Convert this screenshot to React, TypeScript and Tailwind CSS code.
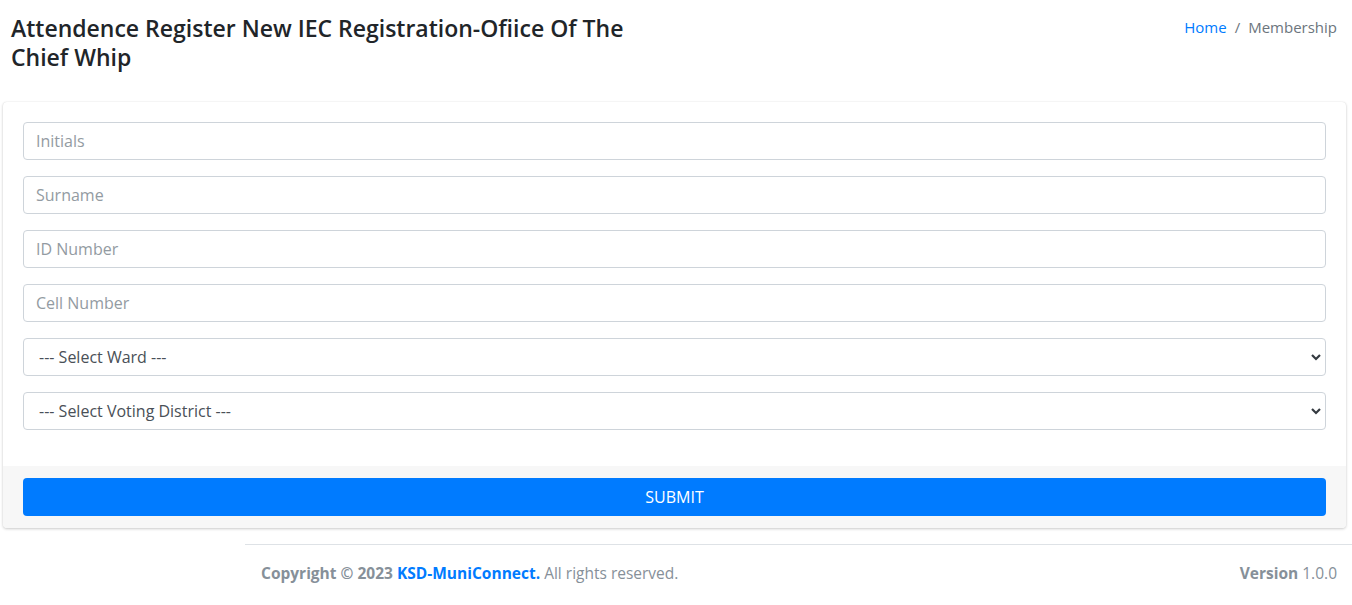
export default function App() {
  const fields = ["Initials", "Surname", "ID Number", "Cell Number"];
  const selects = ["--- Select Ward ---", "--- Select Voting District ---"];

  return (
    <div className="min-h-[605px] bg-white font-['Open_Sans',sans-serif] text-[#212529]">
      {/* content header */}
      <div className="flex justify-between px-[11px] pt-[14px] pb-[30px]">
        <h1 className="w-[640px] text-[23px] leading-[29px] font-semibold">
          Attendence Register New IEC Registration-Ofiice Of The Chief Whip
        </h1>
        <div className="flex items-start gap-2 pt-[1px] pr-[4px] text-[15px] leading-[24px]">
          <a className="text-[#007bff]">Home</a>
          <span className="text-[#6c757d]">/</span>
          <span className="text-[#6c757d]">Membership</span>
        </div>
      </div>

      {/* card */}
      <div className="ml-[3px] mr-[6px] rounded-[4px] bg-white shadow-[0_0_1px_rgba(0,0,0,0.125),0_1px_3px_rgba(0,0,0,0.2)]">
        <div className="flex flex-col gap-4 px-5 pt-5 pb-9">
          {fields.map((f) => (
            <input
              key={f}
              placeholder={f}
              className="h-[38px] w-full rounded-[4px] border border-[#ced4da] px-3 text-[16px] text-[#495057] outline-none placeholder:text-[#939ba2]"
            />
          ))}
          {selects.map((s) => (
            <div key={s} className="relative">
              <select className="h-[38px] w-full appearance-none rounded-[4px] border border-[#ced4da] bg-white pl-[15px] text-[16px] text-[#495057] outline-none">
                <option>{s}</option>
              </select>
              <svg
                className="pointer-events-none absolute right-[4px] top-[14px]"
                width="12"
                height="10"
                viewBox="0 0 12 10"
              >
                <path d="M2 3l4 4 4-4" fill="none" stroke="#343a40" strokeWidth="2.2" />
              </svg>
            </div>
          ))}
        </div>
        <div className="rounded-b-[4px] bg-[#f7f7f7] px-5 py-3">
          <button className="h-[38px] w-full rounded-[4px] bg-[#007bff] text-[16px] text-white">
            SUBMIT
          </button>
        </div>
      </div>

      {/* footer */}
      <div className="ml-[245px] mt-4 flex items-center justify-between border-t border-[#dee2e6] pl-4 pr-[15px] pt-[17px] pb-4 text-[15.5px] text-[#869099]">
        <div>
          <strong className="font-bold">
            Copyright © 2023 <a className="text-[#007bff]">KSD-MuniConnect.</a>
          </strong>{" "}
          All rights reserved.
        </div>
        <div>
          <b>Version</b> 1.0.0
        </div>
      </div>
    </div>
  );
}
